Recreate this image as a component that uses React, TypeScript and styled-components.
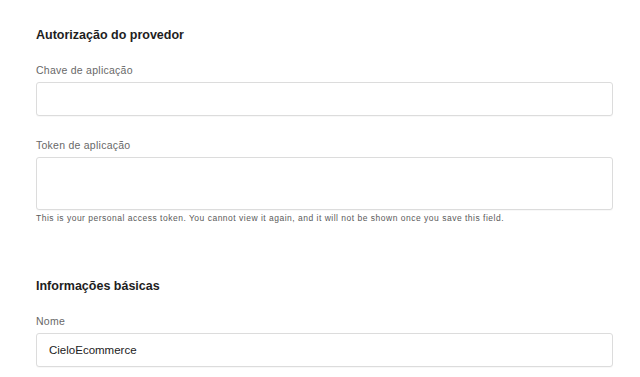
import React from 'react';
import styled, { createGlobalStyle } from 'styled-components';

const GlobalStyle = createGlobalStyle`
  html, body {
    margin: 0;
    padding: 0;
    background: #ffffff;
  }
  body {
    font-family: 'Liberation Sans', Arial, sans-serif;
    -webkit-font-smoothing: antialiased;
  }
  * {
    box-sizing: border-box;
  }
`;

const Page = styled.div`
  width: 640px;
  height: 377px;
  overflow: hidden;
  padding: 27px 27px 0 36px;
`;

const Section = styled.section<{ $gap?: number }>`
  display: flex;
  flex-direction: column;
  margin-bottom: ${({ $gap }) => $gap ?? 0}px;
`;

const SectionTitle = styled.h2`
  margin: 0 0 20px;
  font-size: 12.5px;
  line-height: 16px;
  font-weight: 700;
  color: #1e1e1e;
`;

const Field = styled.div`
  display: flex;
  flex-direction: column;

  & + & {
    margin-top: 22px;
  }
`;

const Label = styled.label`
  font-size: 10.5px;
  line-height: 14px;
  letter-spacing: 0.25px;
  color: #686868;
  margin-bottom: 5px;
`;

const TextInput = styled.input`
  width: 100%;
  height: 34px;
  padding: 0 12px;
  border: 1px solid #dcdcdc;
  border-radius: 3px;
  background: #fff;
  font-family: inherit;
  font-size: 11.5px;
  color: #222;
  outline: none;
  box-shadow: 0 1px 1px rgba(0, 0, 0, 0.03);
`;

const TextArea = styled.textarea`
  width: 100%;
  height: 53px;
  padding: 8px 12px;
  border: 1px solid #dcdcdc;
  border-radius: 3px;
  background: #fff;
  font-family: inherit;
  font-size: 11.5px;
  color: #222;
  resize: none;
  outline: none;
  display: block;
  box-shadow: 0 1px 1px rgba(0, 0, 0, 0.03);
`;

const Hint = styled.p`
  margin: 3px 0 0;
  font-size: 8.5px;
  line-height: 11px;
  letter-spacing: 0.5px;
  color: #5a5a5a;
`;

const App = () => {
  return (
    <>
      <GlobalStyle />
      <Page>
        <Section $gap={54}>
          <SectionTitle>Autorização do provedor</SectionTitle>
          <Field>
            <Label htmlFor="app-key">Chave de aplicação</Label>
            <TextInput id="app-key" type="text" />
          </Field>
          <Field>
            <Label htmlFor="app-token">Token de aplicação</Label>
            <TextArea id="app-token" />
            <Hint>
              This is your personal access token. You cannot view it again, and it will not be
              shown once you save this field.
            </Hint>
          </Field>
        </Section>
        <Section>
          <SectionTitle>Informações básicas</SectionTitle>
          <Field>
            <Label htmlFor="name">Nome</Label>
            <TextInput id="name" type="text" defaultValue="CieloEcommerce" />
          </Field>
        </Section>
      </Page>
    </>
  );
};

export default App;
